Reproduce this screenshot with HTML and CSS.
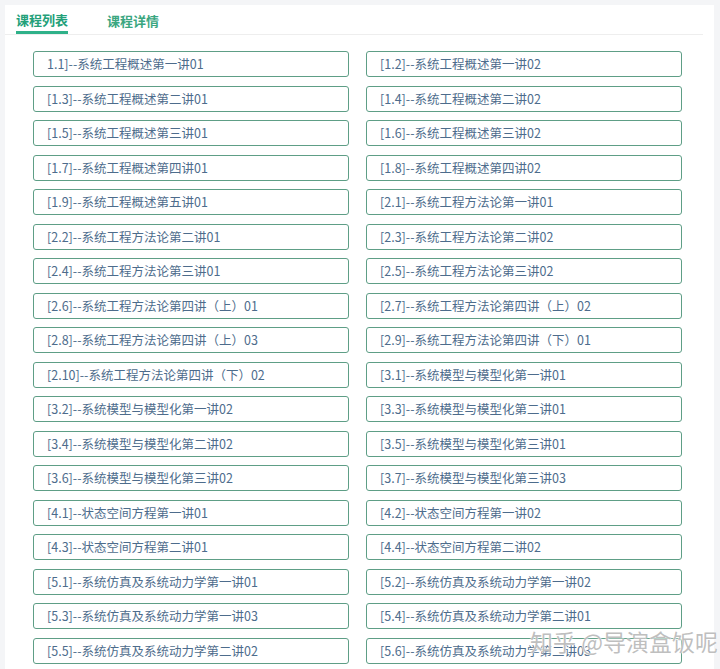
FILE: index.html
```html
<!DOCTYPE html>
<html lang="zh">
<head>
<meta charset="utf-8">
<link rel="stylesheet" href="styles.css">
</head>
<body>
<div class="card">
  <div class="tabs">
    <div class="tab active">课程列表</div>
    <div class="tab">课程详情</div>
  </div>
  <div class="grid">
    <div class="item">1.1]--系统工程概述第一讲01</div>
    <div class="item">[1.2]--系统工程概述第一讲02</div>
    <div class="item">[1.3]--系统工程概述第二讲01</div>
    <div class="item">[1.4]--系统工程概述第二讲02</div>
    <div class="item">[1.5]--系统工程概述第三讲01</div>
    <div class="item">[1.6]--系统工程概述第三讲02</div>
    <div class="item">[1.7]--系统工程概述第四讲01</div>
    <div class="item">[1.8]--系统工程概述第四讲02</div>
    <div class="item">[1.9]--系统工程概述第五讲01</div>
    <div class="item">[2.1]--系统工程方法论第一讲01</div>
    <div class="item">[2.2]--系统工程方法论第二讲01</div>
    <div class="item">[2.3]--系统工程方法论第二讲02</div>
    <div class="item">[2.4]--系统工程方法论第三讲01</div>
    <div class="item">[2.5]--系统工程方法论第三讲02</div>
    <div class="item">[2.6]--系统工程方法论第四讲（上）01</div>
    <div class="item">[2.7]--系统工程方法论第四讲（上）02</div>
    <div class="item">[2.8]--系统工程方法论第四讲（上）03</div>
    <div class="item">[2.9]--系统工程方法论第四讲（下）01</div>
    <div class="item">[2.10]--系统工程方法论第四讲（下）02</div>
    <div class="item">[3.1]--系统模型与模型化第一讲01</div>
    <div class="item">[3.2]--系统模型与模型化第一讲02</div>
    <div class="item">[3.3]--系统模型与模型化第二讲01</div>
    <div class="item">[3.4]--系统模型与模型化第二讲02</div>
    <div class="item">[3.5]--系统模型与模型化第三讲01</div>
    <div class="item">[3.6]--系统模型与模型化第三讲02</div>
    <div class="item">[3.7]--系统模型与模型化第三讲03</div>
    <div class="item">[4.1]--状态空间方程第一讲01</div>
    <div class="item">[4.2]--状态空间方程第一讲02</div>
    <div class="item">[4.3]--状态空间方程第二讲01</div>
    <div class="item">[4.4]--状态空间方程第二讲02</div>
    <div class="item">[5.1]--系统仿真及系统动力学第一讲01</div>
    <div class="item">[5.2]--系统仿真及系统动力学第一讲02</div>
    <div class="item">[5.3]--系统仿真及系统动力学第一讲03</div>
    <div class="item">[5.4]--系统仿真及系统动力学第二讲01</div>
    <div class="item">[5.5]--系统仿真及系统动力学第二讲02</div>
    <div class="item">[5.6]--系统仿真及系统动力学第二讲03</div>
  </div>
</div>
<div class="watermark">知乎 @导演盒饭呢</div>
</body>
</html>
```

FILE: styles.css
```css
html, body {
  margin: 0;
  padding: 0;
  height: 100%;
  overflow: hidden;
}
body {
  background: #f4f5f7;
  font-family: "Noto Sans CJK SC", "Noto Sans", sans-serif;
  position: relative;
}
.card {
  margin: 5px 0 0 5px;
  width: 709px;
  height: 664px;
  background: #ffffff;
  overflow: hidden;
}
.tabs {
  display: flex;
  height: 29px;
  margin-right: 11px;
  padding-left: 11px;
  border-bottom: 1px solid #eeeeee;
  column-gap: 39px;
}
.tab {
  font-size: 13px;
  font-weight: bold;
  color: #3aa680;
  line-height: 29px;
  height: 29px;
  box-sizing: border-box;
  padding-top: 1px;
}
.tab.active {
  color: #23a079;
  border-bottom: 3px solid #2fb189;
  line-height: 26px;
  padding-top: 2px;
}
.grid {
  display: grid;
  grid-template-columns: 316px 316px;
  column-gap: 17px;
  row-gap: 8.5px;
  padding: 16px 0 0 28px;
}
.item {
  box-sizing: border-box;
  height: 26px;
  border: 1px solid #5e9e86;
  border-radius: 3px;
  padding-left: 13px;
  font-size: 12.5px;
  line-height: 24px;
  color: #4d6c8c;
  white-space: nowrap;
  overflow: hidden;
}
.watermark {
  position: absolute;
  left: 530px;
  top: 624px;
  font-size: 23px;
  color: rgba(170, 170, 170, 0.75);
  text-shadow: 0 0 2px #ffffff, 0 0 1px #ffffff;
  white-space: nowrap;
}
```
